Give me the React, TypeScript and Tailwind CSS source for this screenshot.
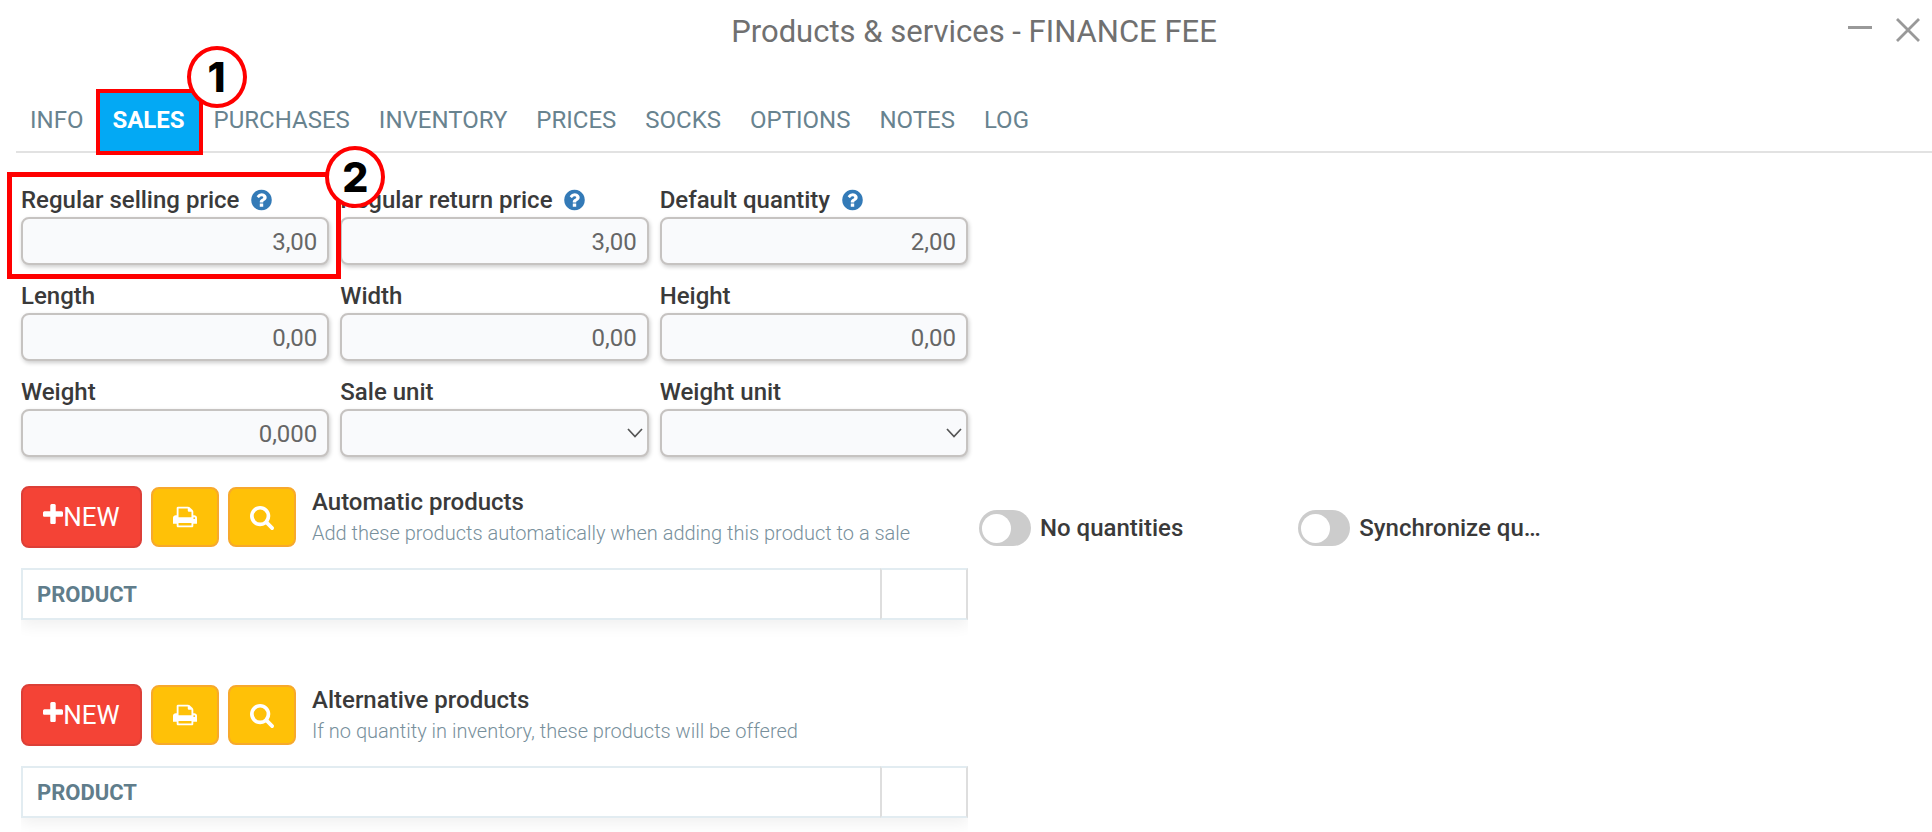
import React from "react";

type IconProps = { className?: string };

function HelpIcon({ className }: IconProps) {
  return (
    <svg viewBox="0 0 1536 1792" fill="currentColor" className={className} aria-hidden="true">
      <path d="M896 1376v-192q0-14-9-23t-23-9H672q-14 0-23 9t-9 23v192q0 14 9 23t23 9h192q14 0 23-9t9-23zm256-672q0-88-55.5-163T958 425t-170-41q-243 0-371 213-15 24 8 42l132 100q7 6 19 6 16 0 25-12 53-68 86-92 34-24 86-24 48 0 85.5 26t37.5 59q0 38-20 61t-68 45q-63 28-115.5 86.5T640 1020v36q0 14 9 23t23 9h192q14 0 23-9t9-23q0-19 21.5-49.5T972 957q32-18 49-28.5t46-35 44.5-48 28-60.5 12.5-81zm384 192q0 209-103 385.5T1153.5 1561 768 1664t-385.5-103T103 1281.5 0 896t103-385.5T382.5 231 768 128t385.5 103T1433 510.5 1536 896z" />
    </svg>
  );
}

function PlusIcon({ className }: IconProps) {
  return (
    <svg viewBox="0 0 1408 1792" fill="currentColor" className={className} aria-hidden="true">
      <path d="M1408 736v192q0 40-28 68t-68 28H896v416q0 40-28 68t-68 28H608q-40 0-68-28t-28-68v-416H96q-40 0-68-28T0 928V736q0-40 28-68t68-28h416V224q0-40 28-68t68-28h192q40 0 68 28t28 68v416h416q40 0 68 28t28 68z" />
    </svg>
  );
}

function PrintIcon({ className }: IconProps) {
  return (
    <svg
      viewBox="0 0 1664 1792"
      preserveAspectRatio="none"
      fill="currentColor"
      className={className}
      aria-hidden="true"
    >
      <path d="M384 1530h896v-180H384v180zm0-610h896V512h-160q-40 0-68-28t-28-68V256H384v664zm1152 64q0-26-19-45t-45-19-45 19-19 45 19 45 45 19 45-19 19-45zm128-24v416q0 13-9.5 22.5t-22.5 9.5h-224v160q0 40-28 68t-68 28H352q-40 0-68-28t-28-68v-160H32q-13 0-22.5-9.5T0 1376V960q0-79 56.5-135.5T192 768h64V224q0-40 28-68t68-28h672q40 0 88 20t76 48l152 152q28 28 48 76t20 88v256h64q79 0 135.5 56.5T1664 960z" />
    </svg>
  );
}

function SearchIcon({ className }: IconProps) {
  return (
    <svg viewBox="0 0 1664 1792" fill="currentColor" className={className} aria-hidden="true">
      <path d="M1152 832q0-185-131.5-316.5T704 384 387.5 515.5 256 832t131.5 316.5T704 1280t316.5-131.5T1152 832zm512 832q0 52-38 90t-90 38q-54 0-90-38l-343-342q-179 124-399 124-143 0-273.5-55.5t-225-150-150-225T0 832t55.5-273.5 150-225 225-150T704 128t273.5 55.5 225 150 150 225T1408 832q0 220-124 399l343 343q37 37 37 90z" />
    </svg>
  );
}

function StepBadge({ value, className }: { value: string; className: string }) {
  return (
    <span
      className={`absolute z-20 flex h-[62px] w-15 items-center justify-center rounded-[50%] border-4 border-[#ff0000] bg-white font-[Inter,sans-serif] text-[41px] leading-none font-extrabold text-black ${className}`}
    >
      {value}
    </span>
  );
}

const TABS = ["INFO", "SALES", "PURCHASES", "INVENTORY", "PRICES", "SOCKS", "OPTIONS", "NOTES", "LOG"];

function Tabs() {
  return (
    <nav className="flex h-16 items-end gap-px border-b-2 border-[#e2e2e2] text-2xl">
      {TABS.map((tab) =>
        tab === "SALES" ? (
          <div key={tab} className="relative flex h-full">
            <a href="#sales" aria-current="page" className="flex items-center bg-[#03a9f4] px-3.5 font-bold text-white">
              {tab}
            </a>
            <span className="pointer-events-none absolute top-0 -right-1 -bottom-1 -left-0.5 z-10 border-4 border-[#ff0000]" />
            <StepBadge value="1" className="-top-[43px] -right-12" />
          </div>
        ) : (
          <a key={tab} href={`#${tab.toLowerCase()}`} className="flex h-full items-center px-3.5 text-[#68838f]">
            {tab}
          </a>
        ),
      )}
    </nav>
  );
}

type FieldProps = {
  id: string;
  label: string;
  value?: string;
  help?: boolean;
  select?: boolean;
  highlight?: boolean;
};

const FIELDS: FieldProps[] = [
  { id: "selling", label: "Regular selling price", value: "3,00", help: true, highlight: true },
  { id: "return", label: "Regular return price", value: "3,00", help: true },
  { id: "quantity", label: "Default quantity", value: "2,00", help: true },
  { id: "length", label: "Length", value: "0,00" },
  { id: "width", label: "Width", value: "0,00" },
  { id: "height", label: "Height", value: "0,00" },
  { id: "weight", label: "Weight", value: "0,000" },
  { id: "sale-unit", label: "Sale unit", select: true },
  { id: "weight-unit", label: "Weight unit", select: true },
];

const CONTROL =
  "h-12 w-full appearance-none rounded-lg border-2 border-[#c6c3c1] bg-[#f9fafc] px-2.5 pt-0.5 text-2xl text-[#666666] shadow-[1px_2px_4px_rgba(0,0,0,0.2)] outline-none";

function Field({ id, label, value, help, select, highlight }: FieldProps) {
  return (
    <div className="relative">
      <div className="mb-px flex h-8 items-center gap-3">
        <label htmlFor={id} className="text-2xl leading-8 font-medium whitespace-nowrap text-[#3a3a3a]">
          {label}
        </label>
        {help && <HelpIcon className="h-6 w-[21px] text-[#337ab7]" />}
      </div>
      {select ? (
        <div className="relative">
          <select id={id} className={CONTROL} />
          <svg
            viewBox="0 0 16 10"
            className="pointer-events-none absolute top-[19px] right-1.5 h-2.5 w-4"
            fill="none"
            stroke="#555555"
            strokeWidth="1.7"
            aria-hidden="true"
          >
            <path d="M1 1l7 7.5L15 1" />
          </svg>
        </div>
      ) : (
        <input id={id} type="text" defaultValue={value} className={`${CONTROL} text-right`} />
      )}
      {highlight && (
        <>
          <span className="pointer-events-none absolute -top-3 -right-3 -bottom-3.5 -left-3.5 z-10 border-5 border-[#ff0000]" />
          <StepBadge value="2" className="-top-[38px] -right-14" />
        </>
      )}
    </div>
  );
}

function Toggle({ id, label }: { id: string; label: string }) {
  return (
    <div className="mt-6 flex h-9 items-center gap-[9px]">
      <input
        id={id}
        type="checkbox"
        role="switch"
        className="flex h-9 w-[52px] shrink-0 appearance-none items-center rounded-full bg-[#cccccc] px-[3px] before:size-[29px] before:rounded-full before:bg-white checked:bg-[#03a9f4] checked:before:ml-auto"
      />
      <label htmlFor={id} className="truncate text-2xl font-medium text-[#3a3a3a]">
        {label}
      </label>
    </div>
  );
}

const ICON_BUTTON =
  "flex h-[60px] w-[68px] items-center justify-center rounded-lg border-2 border-[#f7a92c] bg-[#ffc107] text-white";

function ProductList({ title, hint, children }: { title: string; hint: string; children?: React.ReactNode }) {
  return (
    <section className="grid grid-cols-6 gap-x-[11px]">
      <div className="col-span-3">
        <div className="flex items-center">
          <button
            type="button"
            className="flex h-[62px] w-[121px] items-center justify-center rounded-lg border-2 border-[#dc3f37] bg-[#f44336] text-[26px] text-white"
          >
            <PlusIcon className="mb-1 h-[26px] w-5" />
            NEW
          </button>
          <button type="button" aria-label="Print" className={`${ICON_BUTTON} ml-[9px]`}>
            <PrintIcon className="h-6 w-6" />
          </button>
          <button type="button" aria-label="Search" className={`${ICON_BUTTON} ml-[9px]`}>
            <SearchIcon className="h-[26px] w-6" />
          </button>
          <div className="ml-4">
            <h2 className="text-2xl leading-8 font-medium text-[#3a3a3a]">{title}</h2>
            <p className="text-xl leading-[30px] font-light text-[#78909c]">{hint}</p>
          </div>
        </div>
        <div className="mt-5 overflow-hidden pb-6">
          <table className="w-full border-separate border-spacing-0 shadow-[0_6px_14px_rgba(0,0,0,0.06)]">
            <thead>
              <tr className="h-[52px]">
                <th
                  scope="col"
                  className="border-2 border-r-0 border-[#e2ecf1] px-3.5 text-left text-[22px] font-bold text-[#607d8b]"
                >
                  PRODUCT
                </th>
                <td className="w-[88px] border-2 border-y-[#e2ecf1] border-x-[#dedede]" />
              </tr>
            </thead>
          </table>
        </div>
      </div>
      {children}
    </section>
  );
}

export default function App() {
  return (
    <main className="min-h-screen overflow-hidden bg-white pl-4 font-[Roboto,sans-serif]">
      <header className="grid h-[89px] grid-cols-[1fr_auto_1fr] items-start pt-3">
        <h1 className="col-start-2 text-[31px] leading-10 text-[#707070]">Products &amp; services - FINANCE FEE</h1>
        <div className="flex justify-end gap-6 pt-1.5 pr-3 text-[#999999]">
          <button type="button" aria-label="Minimize">
            <svg viewBox="0 0 24 24" className="size-6" fill="none" stroke="currentColor" strokeWidth="3">
              <path d="M0 9.5h24" />
            </svg>
          </button>
          <button type="button" aria-label="Close">
            <svg viewBox="0 0 24 24" className="size-6" fill="none" stroke="currentColor" strokeWidth="2.8">
              <path d="M1 1l22 22M23 1L1 23" />
            </svg>
          </button>
        </div>
      </header>
      <Tabs />
      <div className="pr-1.5 pl-[5px]">
        <form className="mt-[31px] grid grid-cols-6 gap-x-[11px]">
          <div className="col-span-3 grid grid-cols-3 gap-x-[11px] gap-y-[15px]">
            {FIELDS.map((field) => (
              <Field key={field.id} {...field} />
            ))}
          </div>
        </form>
        <div className="mt-[29px] flex flex-col gap-10">
          <ProductList
            title="Automatic products"
            hint="Add these products automatically when adding this product to a sale"
          >
            <Toggle id="no-quantities" label="No quantities" />
            <Toggle id="sync-quantities" label="Synchronize qu…" />
          </ProductList>
          <ProductList
            title="Alternative products"
            hint="If no quantity in inventory, these products will be offered"
          />
        </div>
      </div>
    </main>
  );
}
